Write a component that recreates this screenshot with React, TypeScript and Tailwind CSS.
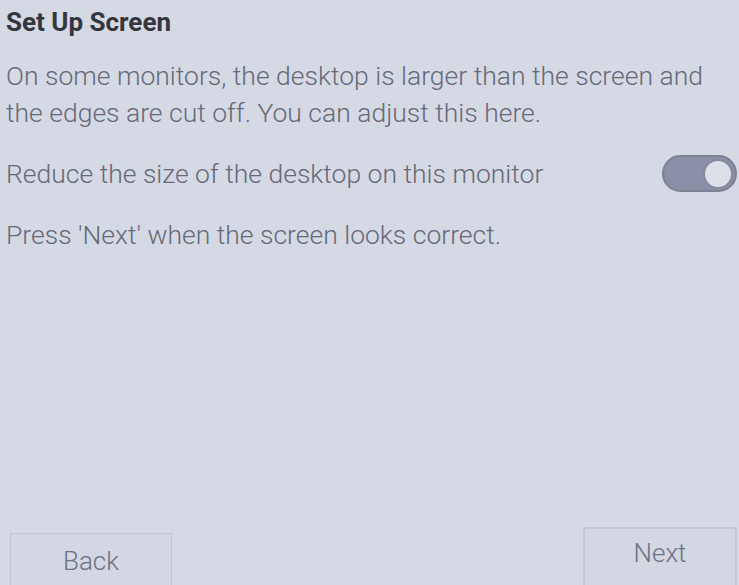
import { useState } from "react";

const App = () => {
    const [reduced, setReduced] = useState(true);

    return (
        <div className="h-[585px] w-[739px] overflow-hidden bg-[#d5d9e4] font-['Roboto',sans-serif] flex flex-col">
            <div className="px-[6px] pt-[6px]">
                <h1 className="text-[26px] font-bold text-[#34363e] leading-[32px]">Set Up Screen</h1>
                <p className="mt-[19px] max-w-[712px] text-[26.5px] font-light leading-[37px] text-[#666a78]">
                    On some monitors, the desktop is larger than the screen and the edges are cut off. You can adjust this here.
                </p>
                <div className="mt-[24px] flex items-center justify-between">
                    <span className="text-[26.5px] font-light leading-[37px] text-[#666a78]">Reduce the size of the desktop on this monitor</span>
                    <button
                        type="button"
                        onClick={() => setReduced(!reduced)}
                        className={`mr-[-4px] flex h-[37px] w-[75px] items-center rounded-full border-2 border-[#7d8194] px-[2px] ${reduced ? "justify-end bg-[#8a90a8]" : "justify-start bg-[#c3c7d3]"}`}
                    >
                        <span className="h-[30px] w-[30px] rounded-full border-2 border-[#858a9c] bg-[#dde0e8]" />
                    </button>
                </div>
                <p className="mt-[24px] text-[26.5px] font-light leading-[37px] text-[#666a78]">Press 'Next' when the screen looks correct.</p>
            </div>
            <div className="mt-auto flex h-[58px] shrink-0 items-start justify-between pl-[10px] pr-[2px]">
                <button type="button" className="mt-[6px] flex h-[64px] w-[162px] shrink-0 items-start justify-center border border-[#c2c6d1] bg-[#d3d7e1] pt-[12px] text-[26px] font-light leading-[30px] text-[#6e7182]">
                    Back
                </button>
                <button type="button" className="flex h-[64px] w-[154px] shrink-0 items-start justify-center border-2 border-[#c2c6d1] bg-[#d3d7e1] pt-[9px] text-[26px] font-light leading-[30px] text-[#6e7182]">
                    Next
                </button>
            </div>
        </div>
    );
};

export default App;
